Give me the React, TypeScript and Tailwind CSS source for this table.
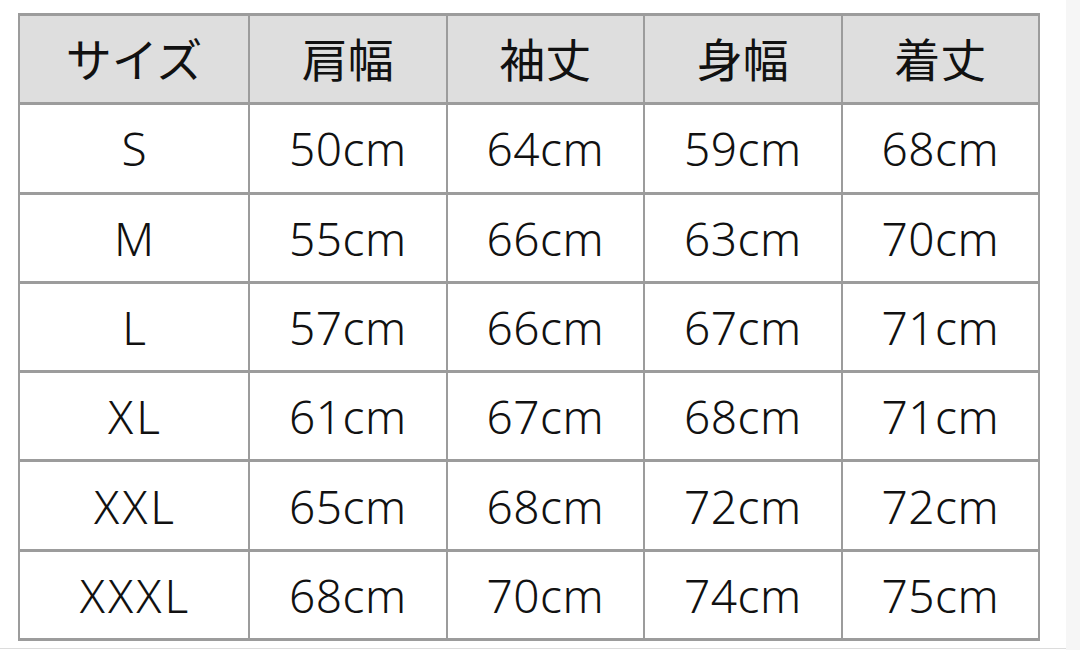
const headers = ["サイズ", "肩幅", "袖丈", "身幅", "着丈"];

const rows = [
  ["S", "50cm", "64cm", "59cm", "68cm"],
  ["M", "55cm", "66cm", "63cm", "70cm"],
  ["L", "57cm", "66cm", "67cm", "71cm"],
  ["XL", "61cm", "67cm", "68cm", "71cm"],
  ["XXL", "65cm", "68cm", "72cm", "72cm"],
  ["XXXL", "68cm", "70cm", "74cm", "75cm"],
];

export default function App() {
  return (
    <div
      className="w-[1080px] h-[650px] flex bg-white text-[#111] font-[350]"
      style={{ fontFamily: '"Noto Sans", "Noto Sans CJK JP", sans-serif' }}
    >
      <div className="flex-1 h-[649px] border-b border-[#dcdcdc] pl-[18px] pt-[13px]">
        {/* size table */}
        <div className="w-[1022px] h-[628px] grid grid-cols-[230px_repeat(4,1fr)] grid-rows-7 border-t-[3px] border-l-[2px] border-[#9c9c9c]">
          {headers.map((h) => (
            <div
              key={h}
              className="flex items-center justify-center bg-[#dedede] border-r-[2px] border-b-[3px] border-[#9c9c9c] text-[46px] leading-none font-normal"
            >
              {h}
            </div>
          ))}
          {rows.map((r) =>
            r.map((v, i) => (
              <div
                key={r[0] + i}
                className={
                  i === 0
                    ? "flex items-center justify-center border-r-[2px] border-b-[3px] border-[#9c9c9c] text-[46px] leading-none tracking-[3px] pl-[3px]"
                    : "flex items-center justify-center border-r-[2px] border-b-[3px] border-[#9c9c9c] text-[46px] leading-none tracking-[0.5px]"
                }
              >
                {v}
              </div>
            ))
          )}
        </div>
      </div>
      <div className="w-[14px] h-full bg-[#f6f6f6]" />
    </div>
  );
}
